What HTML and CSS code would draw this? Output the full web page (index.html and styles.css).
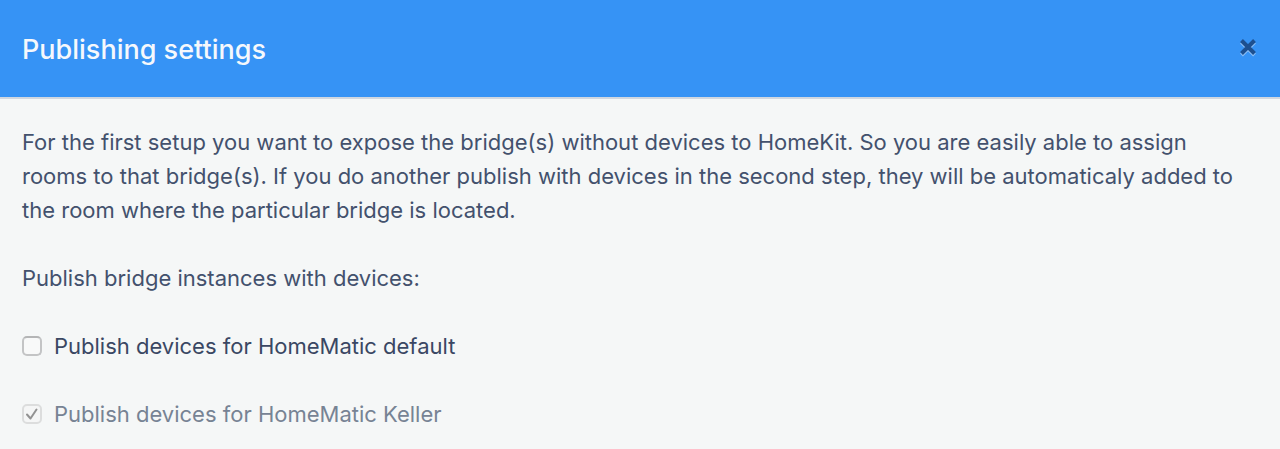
FILE: index.html
```html
<!DOCTYPE html>
<html lang="en">
<head>
<meta charset="utf-8">
<title>Publishing settings</title>
<link rel="stylesheet" href="styles.css">
</head>
<body>
<main class="dialog">
  <header class="dialog-header">
    <h1 class="dialog-title">Publishing settings</h1>
    <button class="close" type="button" aria-label="Close">
      <svg class="close-icon" viewBox="0 0 20 20" aria-hidden="true">
        <path class="close-shade" d="M3.5 5L16.5 18M16.5 5L3.5 18"/>
        <path class="close-cross" d="M3.5 3.5L16.5 16.5M16.5 3.5L3.5 16.5"/>
      </svg>
    </button>
  </header>
  <section class="dialog-body">
    <p class="text">For the first setup you want to expose the bridge(s) without devices to HomeKit. So you are easily able to assign rooms to that bridge(s). If you do another publish with devices in the second step, they will be automaticaly added to the room where the particular bridge is located.</p>
    <p class="text">Publish bridge instances with devices:</p>
    <label class="option" for="default">
      <span class="box"><input class="check" type="checkbox" id="default"><svg class="tick" viewBox="0 0 20 20" aria-hidden="true"><path d="M5 10.5L8.5 14.5L14.5 5.5"/></svg></span>
      <span>Publish devices for HomeMatic default</span>
    </label>
    <label class="option option-disabled" for="keller">
      <span class="box"><input class="check" type="checkbox" id="keller" checked disabled><svg class="tick" viewBox="0 0 20 20" aria-hidden="true"><path d="M5 10.5L8.5 14.5L14.5 5.5"/></svg></span>
      <span>Publish devices for HomeMatic Keller</span>
    </label>
  </section>
</main>
</body>
</html>
```
FILE: styles.css
```css
* { box-sizing: border-box; }
body {
  margin: 0;
  background: #f5f7f7;
  color: #43516d;
  font-family: Inter, "Liberation Sans", sans-serif;
  font-size: 22px;
  line-height: 34px;
}
.dialog-header {
  display: flex;
  align-items: center;
  justify-content: space-between;
  padding: 33px 22px 30px;
  background: #3693f5;
  border-bottom: 2px solid #d0d7e0;
}
.dialog-title {
  margin: 0;
  color: #f5f8fc;
  font-size: 27px;
  font-weight: 500;
}
.close {
  display: flex;
  padding: 0 0 6px;
  border: 0;
  background: none;
}
.close-icon {
  width: 20px;
  height: 20px;
  fill: none;
  stroke-width: 4;
}
.close-shade { stroke: #8cbff5; }
.close-cross { stroke: #1d5090; }
.dialog-body {
  display: flex;
  flex-direction: column;
  gap: 34px;
  padding: 26px 22px 20px;
}
.text { margin: 0; }
.option {
  display: flex;
  align-items: center;
  gap: 12px;
  color: #3a4763;
}
.option-disabled { color: #778394; }
.box { display: grid; }
.check {
  grid-area: 1 / 1;
  appearance: none;
  width: 20px;
  height: 20px;
  margin: 0;
  border: 2px solid #c3c4c5;
  border-top-color: #b4b5b6;
  border-radius: 5px;
  background: #f8f9f9;
}
.check:disabled {
  border-color: #dcdddd;
  background: #f5f6f6;
}
.tick {
  grid-area: 1 / 1;
  width: 20px;
  height: 20px;
  fill: none;
  stroke: #929292;
  stroke-width: 2;
  stroke-linecap: round;
  stroke-linejoin: round;
  pointer-events: none;
  visibility: hidden;
}
.check:checked + .tick { visibility: visible; }
```
